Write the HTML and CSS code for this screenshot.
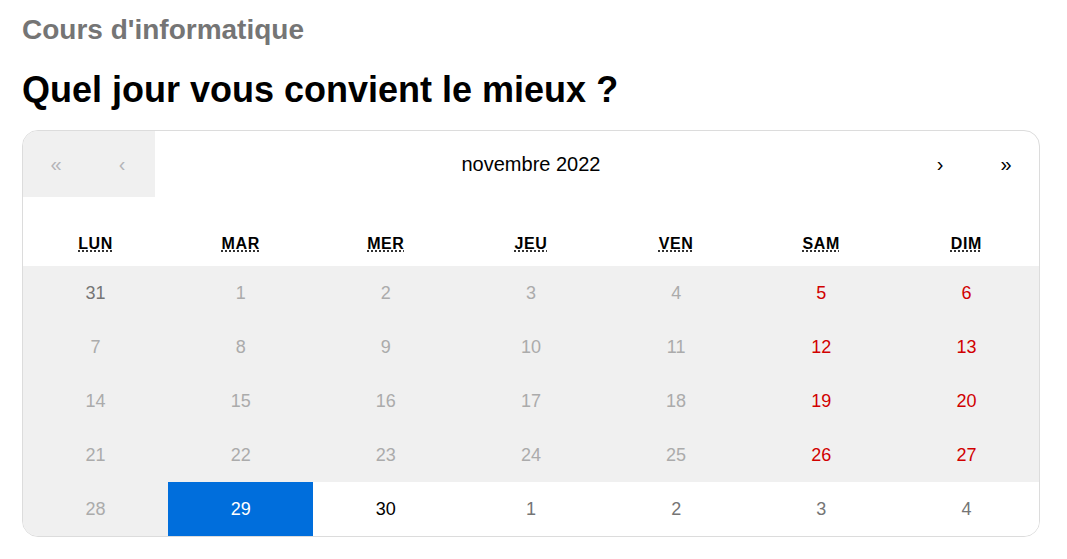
FILE: index.html
```html
<!DOCTYPE html>
<html lang="fr">
<head>
<meta charset="utf-8">
<title>Cours d'informatique</title>
<link rel="stylesheet" href="styles.css">
</head>
<body>
<main class="page">
  <h2 class="course">Cours d'informatique</h2>
  <h1 class="question">Quel jour vous convient le mieux ?</h1>
  <div class="calendar">
    <div class="nav">
      <button class="nav-btn" disabled>«</button>
      <button class="nav-btn" disabled>‹</button>
      <span class="nav-label">novembre 2022</span>
      <button class="nav-btn">›</button>
      <button class="nav-btn">»</button>
    </div>
    <div class="weekdays">
      <div class="wd"><abbr title="lundi">LUN</abbr></div>
      <div class="wd"><abbr title="mardi">MAR</abbr></div>
      <div class="wd"><abbr title="mercredi">MER</abbr></div>
      <div class="wd"><abbr title="jeudi">JEU</abbr></div>
      <div class="wd"><abbr title="vendredi">VEN</abbr></div>
      <div class="wd"><abbr title="samedi">SAM</abbr></div>
      <div class="wd"><abbr title="dimanche">DIM</abbr></div>
    </div>
    <div class="days">
      <button class="day disabled neighbor">31</button>
      <button class="day disabled">1</button>
      <button class="day disabled">2</button>
      <button class="day disabled">3</button>
      <button class="day disabled">4</button>
      <button class="day disabled weekend">5</button>
      <button class="day disabled weekend">6</button>

      <button class="day disabled">7</button>
      <button class="day disabled">8</button>
      <button class="day disabled">9</button>
      <button class="day disabled">10</button>
      <button class="day disabled">11</button>
      <button class="day disabled weekend">12</button>
      <button class="day disabled weekend">13</button>

      <button class="day disabled">14</button>
      <button class="day disabled">15</button>
      <button class="day disabled">16</button>
      <button class="day disabled">17</button>
      <button class="day disabled">18</button>
      <button class="day disabled weekend">19</button>
      <button class="day disabled weekend">20</button>

      <button class="day disabled">21</button>
      <button class="day disabled">22</button>
      <button class="day disabled">23</button>
      <button class="day disabled">24</button>
      <button class="day disabled">25</button>
      <button class="day disabled weekend">26</button>
      <button class="day disabled weekend">27</button>

      <button class="day disabled">28</button>
      <button class="day active">29</button>
      <button class="day">30</button>
      <button class="day neighbor">1</button>
      <button class="day neighbor">2</button>
      <button class="day neighbor">3</button>
      <button class="day neighbor">4</button>
    </div>
  </div>
</main>
</body>
</html>
```

FILE: styles.css
```css
* {
  box-sizing: border-box;
}

html, body {
  margin: 0;
  padding: 0;
  background: #ffffff;
}

body {
  font-family: "Liberation Sans", Arial, sans-serif;
  color: #000000;
}

.page {
  padding: 0 0 0 22px;
}

.course {
  margin: 14px 0 23px;
  font-size: 28px;
  line-height: 32px;
  font-weight: bold;
  color: #757575;
}

.question {
  margin: 0 0 20px;
  font-size: 36px;
  line-height: 41px;
  font-weight: bold;
  color: #000000;
}

.calendar {
  width: 1018px;
  border: 1px solid #dcdcdc;
  border-radius: 16px;
  overflow: hidden;
  background: #ffffff;
}

.nav {
  display: flex;
  height: 66px;
  align-items: stretch;
}

.nav-btn {
  width: 66px;
  flex: 0 0 66px;
  border: 0;
  margin: 0;
  padding: 0;
  background: transparent;
  font-family: inherit;
  font-size: 20px;
  color: #000000;
  cursor: pointer;
}

.nav-btn:disabled {
  background: #f0f0f0;
  color: #b4b4b8;
  cursor: default;
}

.nav-label {
  flex: 1 1 auto;
  display: flex;
  align-items: center;
  justify-content: center;
  font-size: 20px;
  color: #000000;
}

.weekdays {
  display: grid;
  grid-template-columns: repeat(7, 1fr);
  height: 69px;
  align-items: end;
  padding-bottom: 13px;
}

.wd {
  text-align: center;
  font-size: 16px;
  line-height: 18px;
  font-weight: bold;
  letter-spacing: 0.6px;
}

.wd abbr {
  text-decoration: underline dotted;
  text-underline-offset: 2px;
  cursor: help;
}

.days {
  display: grid;
  grid-template-columns: repeat(7, 1fr);
  grid-auto-rows: 54px;
}

.day {
  border: 0;
  margin: 0;
  padding: 0;
  background: #ffffff;
  font-family: inherit;
  font-size: 18px;
  color: #000000;
  cursor: pointer;
}

.day.disabled {
  background: #f0f0f0;
  color: #ababab;
  cursor: default;
}

.day.weekend {
  color: #d10000;
}

.day.neighbor {
  color: #757575;
}

.day.active {
  background: #006edc;
  color: #ffffff;
}
```
